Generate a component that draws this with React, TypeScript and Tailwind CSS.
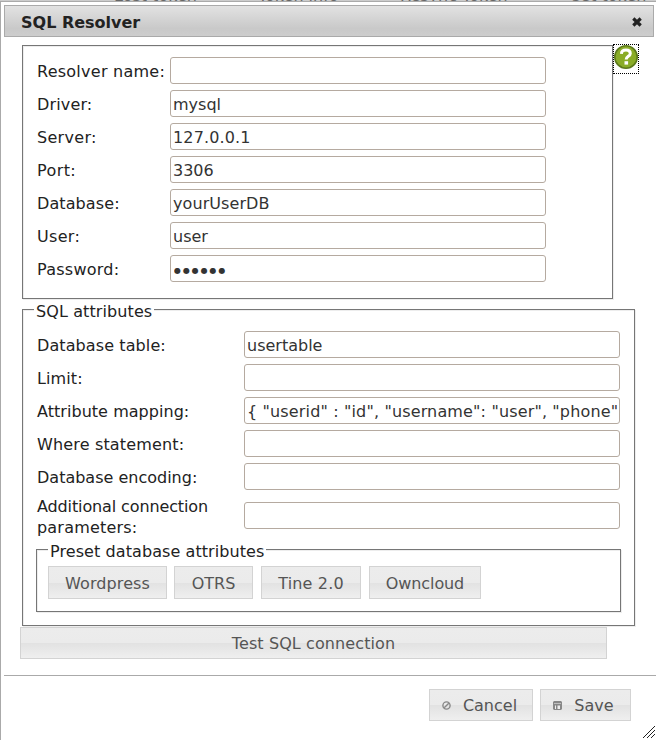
import React from "react";

function Groove({ className, legend, legendClass = "", children }: { className: string; legend?: string; legendClass?: string; children: React.ReactNode }) {
  return (
    <section className={"border border-[#767676] shadow-[1px_1px_0_#ededed,inset_1px_1px_0_#ededed] " + className}>
      {legend && (
        <h2 className={"-mt-[10px] h-5 w-fit bg-white px-[2px] leading-[24px] whitespace-nowrap " + legendClass}>{legend}</h2>
      )}
      {children}
    </section>
  );
}

type RowProps = {
  label: React.ReactNode;
  value?: string;
  labelClass?: string;
  inputClass?: string;
  wide?: boolean;
  tall?: boolean;
};

function Row({ label, value = "", labelClass = "", inputClass = "pt-px", wide, tall }: RowProps) {
  return (
    <div className={"flex items-center " + (tall ? "h-[45px]" : "h-[33px]")}>
      <label className={"shrink-0 pt-[2px] leading-[21px] whitespace-nowrap " + (wide ? "w-[207px] " : "w-[133px] ") + labelClass}>
        {label}
      </label>
      <input
        type="text"
        defaultValue={value}
        className={"h-[27px] w-[376px] shrink-0 rounded-[3px] border border-[#b5aaa0] bg-white px-[2px] text-[#333] outline-none " + inputClass}
      />
    </div>
  );
}

function Button({ className, children }: { className: string; children: React.ReactNode }) {
  return (
    <button
      className={"flex shrink-0 items-center justify-center border border-[#d3d3d3] bg-[linear-gradient(#ececec_0%,#ebebeb_50%,#e2e2e2_51%,#efefef_100%)] whitespace-nowrap text-[#555] " + className}
    >
      {children}
    </button>
  );
}

export default function App() {
  return (
    <div className="relative h-[740px] w-[656px] overflow-hidden bg-white font-['DejaVu_Sans',Verdana,sans-serif] text-[16px] text-[#222]">
      <div className="relative h-px overflow-hidden bg-[#ccc] text-[#666]">
        <span className="absolute -top-[13px] left-[114px] leading-[18px]">Lost token</span>
        <span className="absolute -top-[13px] left-[258px] leading-[18px]">Token info</span>
        <span className="absolute -top-[13px] left-[400px] leading-[18px]">Resync Token</span>
        <span className="absolute -top-[13px] left-[572px] leading-[18px]">set token p</span>
      </div>
      <div className="h-[739px] border-t border-l border-[#aaa] pt-[3px] pl-[3px]">
        <header className="flex h-8 w-[650px] items-center justify-between border border-[#aaa] bg-[linear-gradient(#e2e2e2,#c9c9c9_75%,#cdcdcd)] pr-[11px] pl-4">
          <h1 className="pt-[3px] text-[16px] font-bold">SQL Resolver</h1>
          <svg width="10" height="10" viewBox="0 0 10 10" className="mt-px text-[#222]">
            <path d="M1.3 1.5 8.7 8.5M8.7 1.5 1.3 8.5" stroke="currentColor" strokeWidth="3.2" />
          </svg>
        </header>

        <main className="pt-2 pl-[18px]">
          <div className="flex">
            <Groove className="h-[254px] w-[591px] pt-[8px] pl-[14px]">
              <Row label="Resolver name:" labelClass="tracking-[0.25px]" />
              <Row label="Driver:" labelClass="tracking-[0.15px]" value="mysql" />
              <Row label="Server:" labelClass="tracking-[0.3px]" value="127.0.0.1" inputClass="pt-px tracking-[0.15px]" />
              <Row label="Port:" labelClass="tracking-[0.4px]" value="3306" />
              <Row label="Database:" labelClass="tracking-[0.1px]" value="yourUserDB" inputClass="pt-px tracking-[0.08px]" />
              <Row label="User:" labelClass="tracking-[0.3px]" value="user" />
              <Row label="Password:" labelClass="tracking-[0.25px]" value="●●●●●●" inputClass="pt-[3px] pl-[3px] text-[8px] tracking-[1.9px]" />
            </Groove>
            <a className="-mt-px h-[30px] w-[26px] border border-dotted border-black">
              <svg width="24" height="24" viewBox="0 0 24 24">
                <circle cx="12" cy="12" r="11.2" fill="#8aac27" stroke="#5d7a1c" strokeWidth="1.6" />
                <path d="M7.4 8.8C7.6 6 9.4 5.1 12 5.1c2.6 0 4.3 1.2 4.3 3.3 0 3-4.1 2.8-4.1 6" fill="none" stroke="#fff" strokeWidth="3" />
                <rect x="10.5" y="16.2" width="3.6" height="3.4" fill="#fff" />
              </svg>
            </a>
          </div>

          <Groove className="mt-[10px] h-[317px] w-[613px] pl-[14px]" legend="SQL attributes" legendClass="-ml-[3px] tracking-[0.1px]">
            <div className="h-[8px]" />
            <Row wide label="Database table:" labelClass="tracking-[0.1px]" value="usertable" />
            <Row wide label="Limit:" labelClass="tracking-[0.1px]" />
            <Row
              wide
              label="Attribute mapping:"
              labelClass="tracking-[0.04px]"
              value={'{ "userid" : "id", "username": "user", "phone" : "telephoneNumber" }'}
              inputClass="pt-px pr-0 tracking-[0.15px]"
            />
            <Row wide label="Where statement:" labelClass="tracking-[0.16px]" />
            <Row wide label="Database encoding:" />
            <Row
              wide
              tall
              label={
                <>
                  <span className="block tracking-[-0.12px]">Additional connection</span>
                  <span className="block tracking-[0.2px]">parameters:</span>
                </>
              }
            />
            <Groove className="mt-[11px] -ml-px h-[63px] w-[585px]" legend="Preset database attributes" legendClass="ml-[11px] tracking-[0.08px]">
              <div className="flex pt-[6px] pl-[11px]">
                <Button className="h-[33px] w-[119px] pt-[2px] tracking-[0.1px]">Wordpress</Button>
                <Button className="ml-[7px] h-[33px] w-[79px] pt-[2px]">OTRS</Button>
                <Button className="ml-2 h-[33px] w-[100px] pt-[2px] tracking-[0.15px]">Tine 2.0</Button>
                <Button className="ml-2 h-[33px] w-[112px] pt-[2px] tracking-[-0.1px]">Owncloud</Button>
              </div>
            </Groove>
          </Groove>

          <Button className="relative mt-px -ml-[2px] h-8 w-[587px] pt-[2px] tracking-[0.1px]">Test SQL connection</Button>
        </main>

        <footer className="mt-4 flex border-t border-[#aaa] pt-[13px] pl-[425px]">
          <Button className="h-8 w-[104px] pt-[2px] pr-[3px]">
            <svg width="9" height="9" viewBox="0 0 9 9" className="mr-[12px] -mt-px" fill="none" stroke="#888" strokeWidth="1.4">
              <circle cx="4.5" cy="4.5" r="3.6" />
              <path d="M2.2 6.8 6.8 2.2" />
            </svg>
            Cancel
          </Button>
          <Button className="ml-[7px] h-8 w-[91px] pt-[2px] pr-1">
            <svg width="9" height="9" viewBox="0 0 9 9" className="mr-[12px] -mt-px">
              <path d="M1 0H8L9 1V8L8 9H1L0 8V1Z" fill="#888" />
              <path d="M1 2.5H8" stroke="#ccc" strokeWidth=".8" />
              <path d="M2 4.5h1V8H2zM4.5 4.5H7V8H4.5z" fill="#eee" />
            </svg>
            Save
          </Button>
        </footer>
      </div>
      <svg className="absolute right-px bottom-[2px]" width="12" height="12" viewBox="0 0 12 12" shapeRendering="crispEdges">
        <path d="M0 12 12 0M4 12 12 4M8 12 12 8" stroke="#222" strokeWidth="1" />
      </svg>
    </div>
  );
}
